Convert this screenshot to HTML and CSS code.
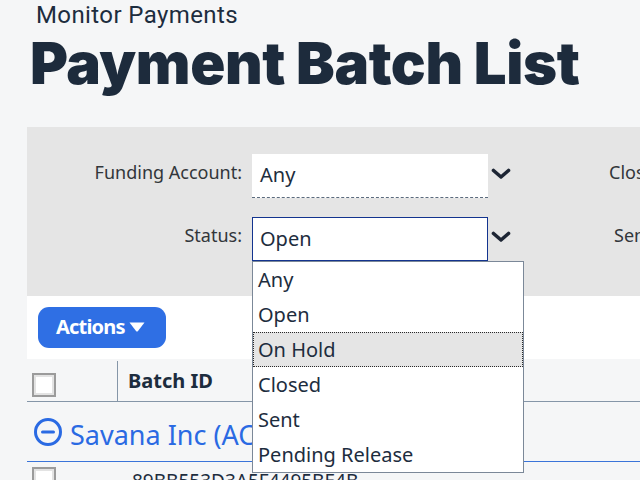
FILE: index.html
```html
<!DOCTYPE html>
<html lang="en">
<head>
<meta charset="utf-8">
<title>Payment Batch List</title>
<link rel="stylesheet" href="styles.css">
</head>
<body>
<header class="page-header">
  <div class="subtitle">Monitor Payments</div>
  <h1 class="title">Payment Batch List</h1>
</header>

<main class="content">
  <section class="filters">
    <div class="filter-grid">
      <label class="f-label">Funding Account:</label>
      <div class="f-input dashed">Any</div>
      <svg class="chev" viewBox="0 0 20 12" width="20" height="12"><polyline points="2.5,2.5 10,9 17.5,2.5"/></svg>
      <label class="f-label2">Close Date:</label>

      <label class="f-label">Status:</label>
      <div class="f-input focused">Open</div>
      <svg class="chev" viewBox="0 0 20 12" width="20" height="12"><polyline points="2.5,2.5 10,9 17.5,2.5"/></svg>
      <label class="f-label2 shift">Sent Date:</label>
    </div>
  </section>

  <section class="toolbar">
    <button class="btn-actions">Actions<svg class="tri" viewBox="0 0 18 12" width="18" height="12"><path d="M1.5 1.5 H16.5 L10 10 Q9 11.2 8 10 Z"/></svg></button>
  </section>

  <section class="table">
    <div class="thead">
      <div class="cell-check"><span class="checkbox"></span></div>
      <div class="cell-id">Batch ID</div>
    </div>
    <div class="group-row">
      <svg class="minus" viewBox="0 0 30 30" width="30" height="30"><circle cx="15" cy="15" r="12.5"/><line x1="9.5" y1="15" x2="20.5" y2="15"/></svg>
      <span class="group-name">Savana Inc (ACME Funding)</span>
    </div>
    <div class="row">
      <div class="cell-check"><span class="checkbox"></span></div>
      <div class="cell-id row-id">89BB553D3A5F4495BE4B</div>
    </div>
  </section>

  <ul class="dropdown">
    <li>Any</li>
    <li>Open</li>
    <li class="hover">On Hold</li>
    <li>Closed</li>
    <li>Sent</li>
    <li>Pending Release</li>
  </ul>
</main>
</body>
</html>
```

FILE: styles.css
```css
html, body {
  margin: 0;
  padding: 0;
  overflow: hidden;
  width: 640px;
  height: 480px;
}
body {
  background: #f5f6f7;
  color: #1d2d3e;
  font-family: "Noto Sans", sans-serif;
}
.page-header {
  padding: 0 0 0 30px;
}
.subtitle {
  font-family: Roboto, sans-serif;
  font-size: 24px;
  line-height: 28px;
  padding-top: 1px;
  padding-left: 6px;
  letter-spacing: 0.4px;
  color: #1d2d3e;
}
.title {
  margin: 0;
  font-family: Inter, sans-serif;
  font-weight: 900;
  font-size: 58px;
  line-height: 68px;
  color: #1d2b3c;
  letter-spacing: -0.4px;
}
.content {
  position: relative;
  margin-top: 30px;
  margin-left: 27px;
}
.filters {
  background: #e5e5e5;
  height: 169px;
  box-sizing: border-box;
  padding-top: 27px;
  overflow: hidden;
}
.filter-grid {
  display: grid;
  grid-template-columns: 215px 236px 32px auto;
  column-gap: 10px;
  row-gap: 19px;
  align-items: center;
}
.f-label {
  text-align: right;
  font-size: 18px;
  color: #32363a;
  padding-bottom: 8px;
}
.f-label2 {
  font-size: 18px;
  color: #32363a;
  white-space: nowrap;
  padding-left: 69px;
  padding-bottom: 8px;
}
.f-label2.shift {
  padding-left: 74px;
}
.f-input {
  height: 44px;
  box-sizing: border-box;
  background: #fff;
  font-size: 20px;
  line-height: 42px;
  padding-left: 8px;
  color: #1d2d3e;
}
.f-input.dashed {
  border-bottom: 1px dashed #5b6b7d;
}
.f-input.focused {
  border: 1px solid #13348f;
  padding-left: 7px;
}
.chev {
  margin-left: -7px;
  margin-bottom: 4px;
  fill: none;
  stroke: #1d2534;
  stroke-width: 3.6;
  stroke-linecap: round;
  stroke-linejoin: round;
}
.toolbar {
  background: #fff;
  height: 63px;
  box-sizing: border-box;
  padding: 11px 0 0 11px;
}
.btn-actions {
  display: flex;
  align-items: center;
  gap: 3px;
  height: 41px;
  width: 128px;
  box-sizing: border-box;
  padding: 0 0 2px 18px;
  border: none;
  border-radius: 11px;
  background: #2f6fe4;
  color: #fff;
  font-family: "Noto Sans", sans-serif;
  font-weight: 700;
  font-size: 20px;
  letter-spacing: -0.8px;
}
.tri {
  fill: #fff;
}
.thead {
  display: flex;
  height: 42px;
  border-bottom: 1px solid #8596a8;
  align-items: stretch;
}
.cell-check {
  width: 91px;
  box-sizing: border-box;
  padding-left: 5px;
  display: flex;
  align-items: center;
  padding-top: 10px;
}
.thead .cell-check {
  border-right: 1px solid #8596a8;
  margin-top: 2px;
  padding-top: 8px;
}
.checkbox {
  display: block;
  width: 24px;
  height: 24px;
  box-sizing: border-box;
  border: 2px solid #9b9b9b;
  background: #fff;
  box-shadow: inset 0 0 0 2px #e3e3e3;
}
.cell-id {
  padding-left: 10px;
  font-weight: 700;
  font-size: 20px;
  display: flex;
  align-items: center;
  color: #1d2d3e;
}
.group-row {
  height: 59px;
  border-bottom: 1px solid #3a74d9;
  display: flex;
  align-items: center;
  padding-left: 6px;
  gap: 7px;
  color: #2a6ae3;
}
.minus {
  fill: none;
  stroke: #2a6ae3;
  stroke-width: 3;
  stroke-linecap: round;
}
.group-name {
  font-size: 27px;
  white-space: nowrap;
  padding-top: 6px;
}
.row {
  display: flex;
  height: 40px;
}
.row .cell-check {
  align-items: flex-start;
  padding-top: 5px;
}
.row-id {
  font-weight: 400;
  font-size: 19px;
  align-items: flex-start;
  padding-top: 6px;
  padding-left: 14px;
}
.dropdown {
  position: absolute;
  left: 225px;
  top: 134px;
  width: 272px;
  margin: 0;
  padding: 0;
  list-style: none;
  background: #fff;
  border: 1px solid #7b8898;
  box-sizing: border-box;
}
.dropdown li {
  height: 35px;
  line-height: 35px;
  font-size: 20px;
  padding-left: 5px;
  color: #1d2d3e;
  box-sizing: border-box;
}
.dropdown li.hover {
  background: #e5e5e5;
  border: 1px dotted #2a2a2a;
  line-height: 33px;
  padding-left: 4px;
}
```
